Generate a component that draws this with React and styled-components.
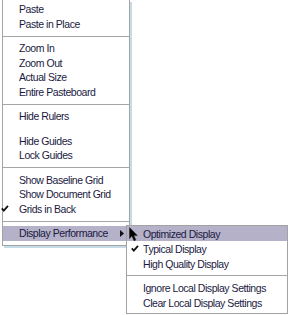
import React from "react";
import styled, { createGlobalStyle } from "styled-components";

const GlobalStyle = createGlobalStyle`
  html, body { margin: 0; padding: 0; background: #ffffff; }
  body { font-family: "Liberation Sans", Arial, sans-serif; }
`;

const Page = styled.div`
  position: relative;
  width: 288px;
  height: 315px;
  overflow: hidden;
  background: #ffffff;
`;

const MainMenu = styled.div`
  margin-left: 2px;
  width: 126px;
  background: #ffffff;
  border: 1px solid #a3a3a3;
  border-top: none;
  box-shadow: 2px 2px 0 #c6dbe8;
  padding: 2px 0 4px;
`;

const SubMenu = styled.div`
  position: absolute;
  left: 126px;
  top: 225px;
  width: 160px;
  background: #ffffff;
  border: 1px solid #a3a3a3;
  padding: 0 0 3px;
`;

const Item = styled.div`
  display: flex;
  align-items: center;
  height: ${(p) => p.$h}px;
  padding-right: 5px;
  background: ${(p) => (p.$active ? "#b4b1c9" : "transparent")};
  color: #1b1a42;
  font-size: 10.5px;
  letter-spacing: -0.45px;
  white-space: nowrap;
`;

const CheckSlot = styled.span`
  display: flex;
  align-items: center;
  flex: none;
  width: ${(p) => p.$w}px;
  margin-left: ${(p) => p.$off}px;
`;

const Label = styled.span`
  flex: 1;
`;

const Separator = styled.div`
  height: ${(p) => p.$h}px;
  display: flex;
  align-items: center;
  &::after {
    content: "";
    flex: 1;
    height: 1px;
    background: ${(p) => (p.$blank ? "transparent" : "#a5a5a5")};
  }
`;

const Cursor = styled.svg`
  position: absolute;
  left: 129px;
  top: 227px;
`;

const Check = () => (
  <svg width="8" height="7" viewBox="0 0 8 7">
    <path d="M0.8 3.4 L2.8 5.6 L7 0.9" fill="none" stroke="#111" strokeWidth="1.8" />
  </svg>
);

const Arrow = () => (
  <svg width="4" height="7" viewBox="0 0 4 7">
    <polygon points="0,0 4,3.5 0,7" fill="#111" />
  </svg>
);

const mainItems = [
  { t: "Paste" },
  { t: "Paste in Place" },
  { sep: true },
  { t: "Zoom In" },
  { t: "Zoom Out" },
  { t: "Actual Size" },
  { t: "Entire Pasteboard" },
  { sep: true },
  { t: "Hide Rulers" },
  { sep: true, blank: true },
  { t: "Hide Guides" },
  { t: "Lock Guides" },
  { sep: true },
  { t: "Show Baseline Grid" },
  { t: "Show Document Grid" },
  { t: "Grids in Back", check: true },
  { sep: true },
  { t: "Display Performance", active: true, sub: true },
];

const subItems = [
  { t: "Optimized Display", active: true },
  { t: "Typical Display", check: true },
  { t: "High Quality Display" },
  { sep: true },
  { t: "Ignore Local Display Settings" },
  { t: "Clear Local Display Settings" },
];

export default function App() {
  return (
    <Page>
      <GlobalStyle />
      <MainMenu>
        {mainItems.map((it, i) =>
          it.sep ? (
            <Separator key={i} $h={10} $blank={it.blank} />
          ) : (
            <Item key={i} $h={14.5} $active={it.active}>
              <CheckSlot $w={18} $off={-2}>{it.check && <Check />}</CheckSlot>
              <Label>{it.t}</Label>
              {it.sub && <Arrow />}
            </Item>
          )
        )}
      </MainMenu>
      <SubMenu>
        {subItems.map((it, i) =>
          it.sep ? (
            <Separator key={i} $h={9} />
          ) : (
            <Item key={i} $h={15} $active={it.active}>
              <CheckSlot $w={12} $off={4}>{it.check && <Check />}</CheckSlot>
              <Label>{it.t}</Label>
            </Item>
          )
        )}
      </SubMenu>
      <Cursor width="10" height="15" viewBox="0 0 10 15">
        <path d="M0.5 0.5 L0.5 11.5 L3 9 L5 13.8 L6.8 13 L4.9 8.4 L8.3 8.4 Z" fill="#000" stroke="#2a2a2a" strokeWidth="0.6" />
      </Cursor>
    </Page>
  );
}
